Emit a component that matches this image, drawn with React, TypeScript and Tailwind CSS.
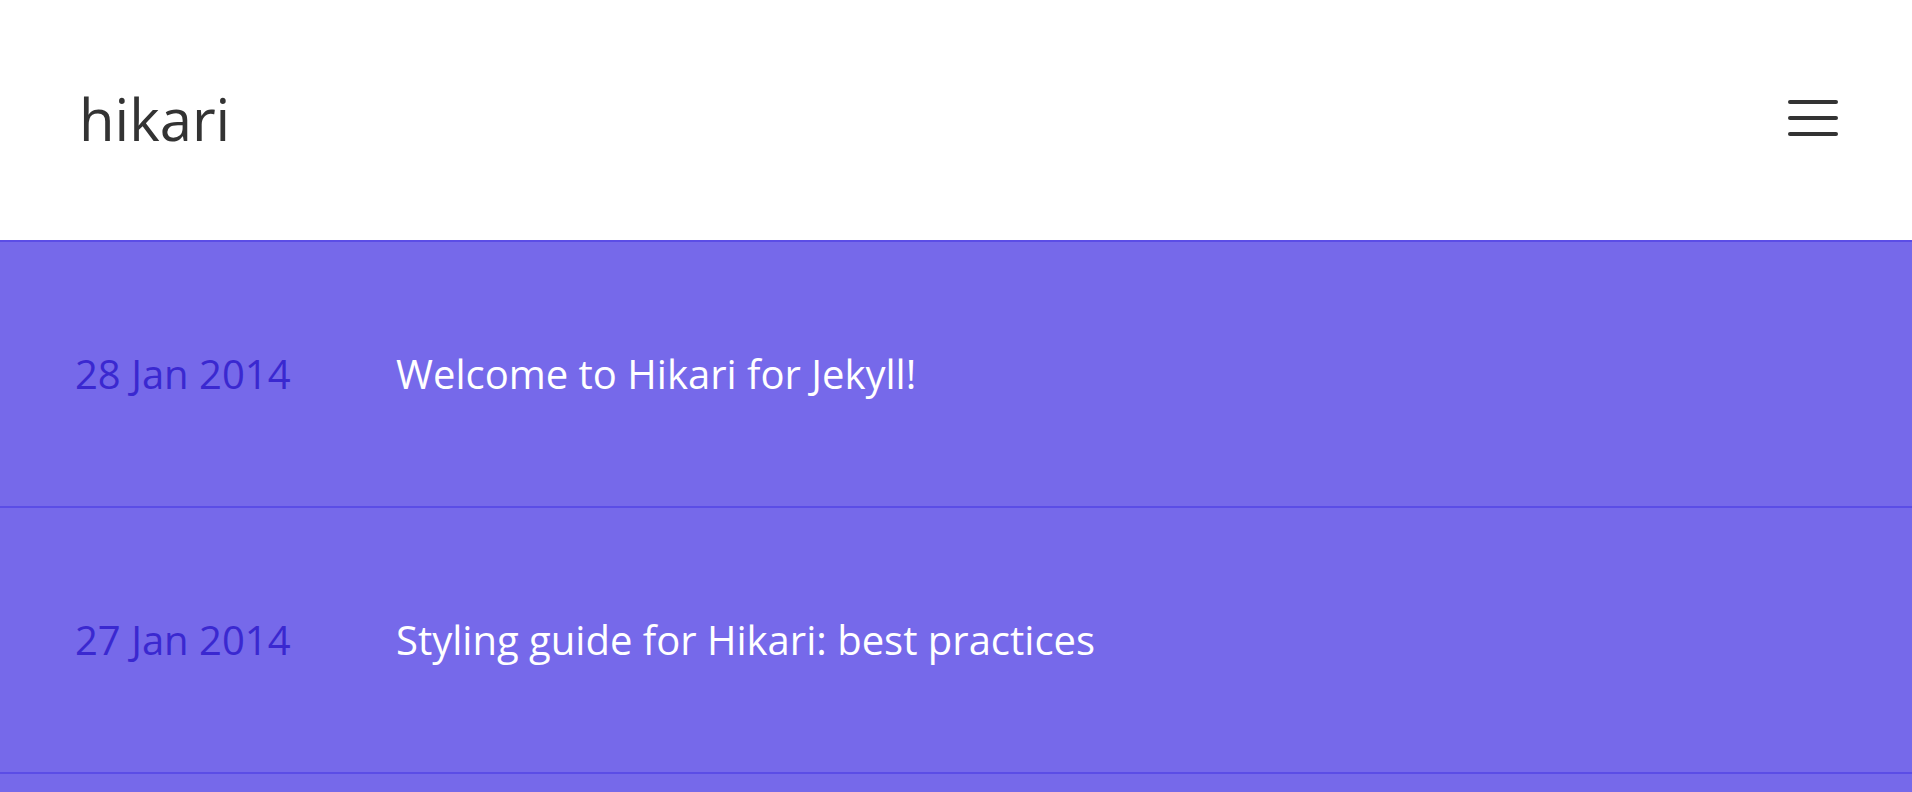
const posts = [
  { date: "28 Jan 2014", title: "Welcome to Hikari for Jekyll!" },
  { date: "27 Jan 2014", title: "Styling guide for Hikari: best practices" },
];

const MenuIcon = () => (
  <svg width="52" height="40" viewBox="0 0 52 40" fill="none">
    <g stroke="#333333" strokeWidth="4" strokeLinecap="round">
      <line x1="3" y1="4" x2="49" y2="4" />
      <line x1="3" y1="20" x2="49" y2="20" />
      <line x1="3" y1="36" x2="49" y2="36" />
    </g>
  </svg>
);

export default function App() {
  return (
    <div className="min-h-screen bg-[#7669ea] font-['Open_Sans',sans-serif]">
      <header className="bg-white h-[242px] border-b-2 border-[#5b4de6] px-[75px] flex items-center justify-between">
        <a className="ml-[4px] text-[58px] text-[#333333] leading-none pb-[2px]">hikari</a>
        <button className="mr-[-2px] mt-[-4px]">
          <MenuIcon />
        </button>
      </header>
      <main>
        {posts.map((post) => (
          <div
            key={post.date}
            className="flex items-center px-[75px] py-[102px] border-b-2 border-[#5b4de6] text-[40px] leading-[60px]"
          >
            <span className="w-[321px] shrink-0 text-[#3a28d0]">{post.date}</span>
            <span className="text-white">{post.title}</span>
          </div>
        ))}
      </main>
    </div>
  );
}
